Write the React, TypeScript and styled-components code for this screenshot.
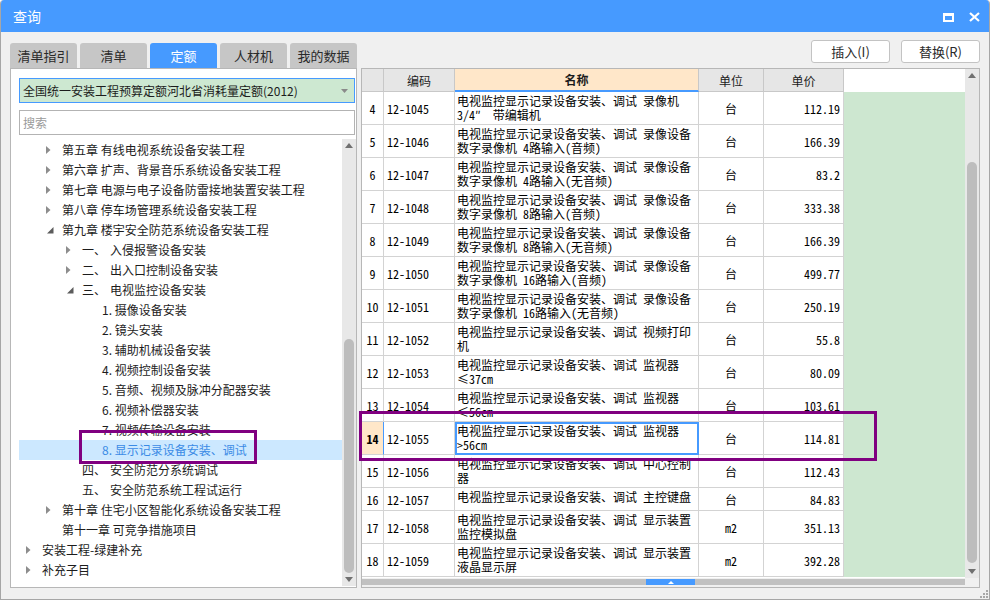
import React from "react";
import styled, { createGlobalStyle } from "styled-components";

const BLUE = "#469aff";
const GRID = "#d3d3d3";
const PURPLE = "#800080";

const GlobalStyle = createGlobalStyle`
  html, body {
    margin: 0;
    padding: 0;
    background: #ffffff;
  }
  body {
    font-family: "Noto Sans CJK SC", "Liberation Sans", sans-serif;
  }
  * {
    box-sizing: border-box;
  }
`;

interface TreeNode {
  level: number;
  text: string;
  sub?: string;
  arrow?: "open" | "closed";
  selected?: boolean;
}

const tree: TreeNode[] = [
  { level: 1, text: "第五章 有线电视系统设备安装工程", arrow: "closed" },
  { level: 1, text: "第六章 扩声、背景音乐系统设备安装工程", arrow: "closed" },
  { level: 1, text: "第七章 电源与电子设备防雷接地装置安装工程", arrow: "closed" },
  { level: 1, text: "第八章 停车场管理系统设备安装工程", arrow: "closed" },
  { level: 1, text: "第九章 楼宇安全防范系统设备安装工程", arrow: "open" },
  { level: 2, text: "一、", sub: "入侵报警设备安装", arrow: "closed" },
  { level: 2, text: "二、", sub: "出入口控制设备安装", arrow: "closed" },
  { level: 2, text: "三、", sub: "电视监控设备安装", arrow: "open" },
  { level: 3, text: "1. 摄像设备安装" },
  { level: 3, text: "2. 镜头安装" },
  { level: 3, text: "3. 辅助机械设备安装" },
  { level: 3, text: "4. 视频控制设备安装" },
  { level: 3, text: "5. 音频、视频及脉冲分配器安装" },
  { level: 3, text: "6. 视频补偿器安装" },
  { level: 3, text: "7. 视频传输设备安装" },
  { level: 3, text: "8. 显示记录设备安装、调试", selected: true },
  { level: 2, text: "四、", sub: "安全防范分系统调试" },
  { level: 2, text: "五、", sub: "安全防范系统工程试运行" },
  { level: 1, text: "第十章 住宅小区智能化系统设备安装工程", arrow: "closed" },
  { level: 1, text: "第十一章 可竞争措施项目" },
  { level: 0, text: "安装工程-绿建补充", arrow: "closed" },
  { level: 0, text: "补充子目", arrow: "closed" },
];

const L1 = "电视监控显示记录设备安装、调试 ";

interface QuotaRow {
  no: number;
  code: string;
  name: string[];
  unit: string;
  price: string;
  selected?: boolean;
}

const rows: QuotaRow[] = [
  { no: 4, code: "12-1045", name: [L1 + "录像机", "3/4″  带编辑机"], unit: "台", price: "112.19" },
  { no: 5, code: "12-1046", name: [L1 + "录像设备", "数字录像机 4路输入(音频)"], unit: "台", price: "166.39" },
  { no: 6, code: "12-1047", name: [L1 + "录像设备", "数字录像机 4路输入(无音频)"], unit: "台", price: "83.2" },
  { no: 7, code: "12-1048", name: [L1 + "录像设备", "数字录像机 8路输入(音频)"], unit: "台", price: "333.38" },
  { no: 8, code: "12-1049", name: [L1 + "录像设备", "数字录像机 8路输入(无音频)"], unit: "台", price: "166.39" },
  { no: 9, code: "12-1050", name: [L1 + "录像设备", "数字录像机 16路输入(音频)"], unit: "台", price: "499.77" },
  { no: 10, code: "12-1051", name: [L1 + "录像设备", "数字录像机 16路输入(无音频)"], unit: "台", price: "250.19" },
  { no: 11, code: "12-1052", name: [L1 + "视频打印", "机"], unit: "台", price: "55.8" },
  { no: 12, code: "12-1053", name: [L1 + "监视器", "≤37cm"], unit: "台", price: "80.09" },
  { no: 13, code: "12-1054", name: [L1 + "监视器", "≤56cm"], unit: "台", price: "103.61" },
  { no: 14, code: "12-1055", name: [L1 + "监视器", ">56cm"], unit: "台", price: "114.81", selected: true },
  { no: 15, code: "12-1056", name: [L1 + "中心控制", "器"], unit: "台", price: "112.43" },
  { no: 16, code: "12-1057", name: [L1 + "主控键盘"], unit: "台", price: "84.83" },
  { no: 17, code: "12-1058", name: [L1 + "显示装置", "监控模拟盘"], unit: "m2", price: "351.13" },
  { no: 18, code: "12-1059", name: [L1 + "显示装置", "液晶显示屏"], unit: "m2", price: "392.28" },
];

const tabs = ["清单指引", "清单", "定额", "人材机", "我的数据"];

export default function App() {
  return (
    <>
      <GlobalStyle />
      <Window>
        <TitleBar>
          <Title>查询</Title>
          <WinButtons>
            <svg width="11" height="9" viewBox="0 0 11 9">
              <rect x="1" y="1" width="9" height="7" fill="none" stroke="#fff" strokeWidth="2" />
              <rect x="0" y="0" width="11" height="3" fill="#fff" />
            </svg>
            <svg width="11" height="10" viewBox="0 0 11 10">
              <path d="M1 1 L10 9 M10 1 L1 9" stroke="#fff" strokeWidth="2.2" />
            </svg>
          </WinButtons>
        </TitleBar>

        <Body>
          <LeftCol>
            <Tabs>
              {tabs.map((t) => (
                <Tab key={t} active={t === "定额"}>
                  {t}
                </Tab>
              ))}
            </Tabs>
            <LeftPanel>
              <Dropdown>
                <span>全国统一安装工程预算定额河北省消耗量定额(2012)</span>
                <svg width="7" height="4" viewBox="0 0 7 4">
                  <polygon points="0,0 7,0 3.5,4" fill="#8a8a8a" />
                </svg>
              </Dropdown>
              <SearchBox>搜索</SearchBox>
              <TreeArea>
                <TreeList>
                  {tree.map((n, i) => (
                    <TreeRow key={i} level={n.level} selected={n.selected}>
                      <ArrowSlot>
                        {n.arrow === "closed" && (
                          <svg width="5" height="8" viewBox="0 0 5 8">
                            <polygon points="0,0 4.5,4 0,8" fill="#8d8d8d" />
                          </svg>
                        )}
                        {n.arrow === "open" && (
                          <svg width="7" height="7" viewBox="0 0 7 7" style={{ marginLeft: 1 }}>
                            <polygon points="6.5,0 6.5,6.5 0,6.5" fill="#5c5c5c" />
                          </svg>
                        )}
                      </ArrowSlot>
                      <TreeText>{n.text}</TreeText>
                      {n.sub && <TreeSub>{n.sub}</TreeSub>}
                    </TreeRow>
                  ))}
                </TreeList>
                <VScroll>
                  <ScrollArrow>
                    <svg width="8" height="5" viewBox="0 0 8 5">
                      <polygon points="0,5 4,0 8,5" fill="#707070" />
                    </svg>
                  </ScrollArrow>
                  <Track top={187} bottom={0}>
                    <Thumb />
                  </Track>
                  <ScrollArrow>
                    <svg width="8" height="5" viewBox="0 0 8 5">
                      <polygon points="0,0 8,0 4,5" fill="#707070" />
                    </svg>
                  </ScrollArrow>
                </VScroll>
              </TreeArea>
            </LeftPanel>
          </LeftCol>

          <RightCol>
            <ButtonRow>
              <ActionButton>插入(I)</ActionButton>
              <ActionButton>替换(R)</ActionButton>
            </ButtonRow>
            <RightPanel>
              <MainArea>
                <TableRegion>
                  <HeaderRow>
                    <HeadCell />
                    <HeadCell>编码</HeadCell>
                    <HeadCell accent>名称</HeadCell>
                    <HeadCell>单位</HeadCell>
                    <HeadCell>单价</HeadCell>
                    <HeadFiller />
                  </HeaderRow>
                  {rows.map((r) => (
                    <DataRow key={r.no} tall={r.name.length > 1}>
                      <NoCell selected={r.selected}>{r.no}</NoCell>
                      <CodeCell>{r.code}</CodeCell>
                      <NameCell selected={r.selected}>
                        {r.name.map((line, i) => (
                          <NameLine key={i}>{line}</NameLine>
                        ))}
                      </NameCell>
                      <UnitCell>{r.unit}</UnitCell>
                      <PriceCell>{r.price}</PriceCell>
                      <Filler />
                    </DataRow>
                  ))}
                </TableRegion>
                <VScroll>
                  <ScrollArrow>
                    <svg width="8" height="5" viewBox="0 0 8 5">
                      <polygon points="0,5 4,0 8,5" fill="#707070" />
                    </svg>
                  </ScrollArrow>
                  <Track top={80} bottom={2}>
                    <Thumb />
                  </Track>
                  <ScrollArrow>
                    <svg width="8" height="5" viewBox="0 0 8 5">
                      <polygon points="0,0 8,0 4,5" fill="#707070" />
                    </svg>
                  </ScrollArrow>
                </VScroll>
              </MainArea>
              <HScrollRow>
                <HBar>
                  <HHandle>
                    <svg width="6" height="3" viewBox="0 0 6 3">
                      <polygon points="0,3 3,0 6,3" fill="#ffffff" />
                    </svg>
                  </HHandle>
                </HBar>
                <Corner />
              </HScrollRow>
            </RightPanel>
          </RightCol>
        </Body>

        <Footer>
          <svg width="9" height="9" viewBox="0 0 9 9">
            <rect x="7" y="1" width="2" height="2" fill="#a8a8a8" />
            <rect x="4" y="4" width="2" height="2" fill="#a8a8a8" />
            <rect x="7" y="4" width="2" height="2" fill="#a8a8a8" />
            <rect x="1" y="7" width="2" height="2" fill="#a8a8a8" />
            <rect x="4" y="7" width="2" height="2" fill="#a8a8a8" />
            <rect x="7" y="7" width="2" height="2" fill="#a8a8a8" />
          </svg>
        </Footer>

        <Highlight style={{ left: 78, top: 430, width: 178, height: 34 }} />
        <Highlight style={{ left: 358, top: 411, width: 518, height: 50 }} />
      </Window>
    </>
  );
}

const Window = styled.div`
  position: relative;
  width: 990px;
  height: 600px;
  display: flex;
  flex-direction: column;
  background: #f0f0f0;
  border: 1px solid #a6a6a6;
  border-top: none;
  border-radius: 4px 4px 0 0;
  overflow: hidden;
  font-size: 12px;
  color: #1c1c1c;
`;

const TitleBar = styled.div`
  flex: none;
  height: 32px;
  background: ${BLUE};
  display: flex;
  align-items: center;
  justify-content: space-between;
  padding: 0 9px 0 12px;
  color: #ffffff;
`;

const Title = styled.span`
  font-size: 14px;
  line-height: 32px;
`;

const WinButtons = styled.div`
  display: flex;
  align-items: center;
  gap: 15px;
  padding-top: 2px;
`;

const Body = styled.div`
  flex: 1;
  min-height: 0;
  display: flex;
  gap: 4px;
  padding: 8px 9px 0 9px;
`;

const LeftCol = styled.div`
  width: 347px;
  flex: none;
  display: flex;
  flex-direction: column;
  padding-top: 3px;
`;

const Tabs = styled.div`
  display: flex;
  gap: 3px;
  height: 25px;
  flex: none;
`;

const Tab = styled.div<{ active?: boolean }>`
  width: 77px;
  display: flex;
  align-items: center;
  justify-content: center;
  border-radius: 3px 3px 0 0;
  font-size: 13px;
  background: ${(p) => (p.active ? BLUE : "#c6c6c6")};
  color: ${(p) => (p.active ? "#ffffff" : "#2a2a2a")};
`;

const LeftPanel = styled.div`
  flex: 1;
  min-height: 0;
  display: flex;
  flex-direction: column;
  background: #ffffff;
  border: 1px solid #b7b7b7;
  padding: 9px 0 0 8px;
`;

const Dropdown = styled.div`
  height: 25px;
  flex: none;
  margin-right: 1px;
  display: flex;
  align-items: center;
  justify-content: space-between;
  padding: 0 6px 0 3px;
  background: #cde8d1;
  border: 1px solid ${BLUE};
  color: #1c1c1c;
`;

const SearchBox = styled.div`
  height: 25px;
  flex: none;
  margin: 7px 1px 0 0;
  display: flex;
  align-items: center;
  padding: 0 3px;
  border: 1px solid #b3b3b3;
  color: #9a9a9a;
`;

const TreeArea = styled.div`
  flex: 1;
  min-height: 0;
  display: flex;
  margin-top: 4px;
  padding-bottom: 1px;
`;

const TreeList = styled.div`
  flex: 1;
  padding-top: 1px;
  overflow: hidden;
`;

const TreeRow = styled.div<{ level: number; selected?: boolean }>`
  height: 20px;
  display: flex;
  align-items: center;
  padding-left: ${(p) => 7 + p.level * 20}px;
  background: ${(p) => (p.selected ? "#cce8ff" : "transparent")};
  color: ${(p) => (p.selected ? "#3b8be6" : "#1c1c1c")};
  white-space: nowrap;
`;

const ArrowSlot = styled.span`
  width: 16px;
  flex: none;
  display: flex;
  align-items: center;
`;

const TreeText = styled.span`
  line-height: 20px;
`;

const TreeSub = styled.span`
  margin-left: 4px;
  line-height: 20px;
`;

const VScroll = styled.div`
  width: 14px;
  flex: none;
  display: flex;
  flex-direction: column;
  background: #e8e8e8;
`;

const ScrollArrow = styled.div`
  height: 13px;
  flex: none;
  display: flex;
  align-items: center;
  justify-content: center;
`;

const Track = styled.div<{ top: number; bottom: number }>`
  flex: 1;
  display: flex;
  flex-direction: column;
  padding: ${(p) => p.top}px 2px ${(p) => p.bottom}px 2px;
`;

const Thumb = styled.div`
  flex: 1;
  border-radius: 5px;
  background: #bdbdbd;
`;

const RightCol = styled.div`
  flex: 1;
  min-width: 0;
  display: flex;
  flex-direction: column;
`;

const ButtonRow = styled.div`
  height: 23px;
  flex: none;
  display: flex;
  justify-content: flex-end;
  gap: 11px;
  margin-bottom: 5px;
`;

const ActionButton = styled.button`
  width: 79px;
  height: 23px;
  padding: 0;
  border: 1px solid #c3c3c3;
  border-radius: 3px;
  background: #ffffff;
  font-family: "Noto Sans CJK SC", "Liberation Sans", sans-serif;
  font-size: 13px;
  color: #2a2a2a;
`;

const RightPanel = styled.div`
  flex: 1;
  min-height: 0;
  display: flex;
  flex-direction: column;
  background: #ffffff;
  border: 1px solid #b7b7b7;
`;

const MainArea = styled.div`
  flex: 1;
  min-height: 0;
  display: flex;
`;

const TableRegion = styled.div`
  flex: 1;
  display: flex;
  flex-direction: column;
  overflow: hidden;
`;

const COLS = "22px 71px 244px 65px 80px 1fr";

const HeaderRow = styled.div`
  display: grid;
  grid-template-columns: ${COLS};
  height: 23px;
  flex: none;
`;

const HeadCell = styled.div<{ accent?: boolean }>`
  display: flex;
  align-items: center;
  justify-content: center;
  background: ${(p) => (p.accent ? "#ffe7c9" : "#e6e6e6")};
  border-right: 1px solid #c8c8c8;
  border-bottom: ${(p) => (p.accent ? `2px solid ${BLUE}` : "1px solid #c8c8c8")};
  font-weight: ${(p) => (p.accent ? 700 : 400)};
  font-size: 12px;
`;

const HeadFiller = styled.div`
  background: #ffffff;
`;

const DataRow = styled.div<{ tall: boolean }>`
  display: grid;
  grid-template-columns: ${COLS};
  height: ${(p) => (p.tall ? 33 : 23)}px;
  flex: none;
  font-family: "Noto Sans CJK SC", sans-serif;
  font-feature-settings: "hwid" 1;
  color: #000000;
`;

const Cell = styled.div`
  border-right: 1px solid ${GRID};
  border-bottom: 1px solid ${GRID};
  display: flex;
  align-items: center;
  white-space: nowrap;
`;

const NoCell = styled(Cell)<{ selected?: boolean }>`
  justify-content: center;
  background: ${(p) => (p.selected ? "#ffe7c9" : "#ffffff")};
  font-weight: ${(p) => (p.selected ? 700 : 400)};
  border-right-color: ${(p) => (p.selected ? BLUE : GRID)};
`;

const CodeCell = styled(Cell)`
  padding-left: 3px;
`;

const NameCell = styled(Cell)<{ selected?: boolean }>`
  flex-direction: column;
  align-items: flex-start;
  justify-content: flex-start;
  padding: 2px 2px 0 2px;
  ${(p) => (p.selected ? `outline: 2px solid ${BLUE}; outline-offset: -2px;` : "")}
`;

const NameLine = styled.div`
  line-height: 14px;
  white-space: pre;
`;

const UnitCell = styled(Cell)`
  justify-content: center;
`;

const PriceCell = styled(Cell)`
  justify-content: flex-end;
  padding-right: 3px;
`;

const Filler = styled.div`
  background: #cde7d0;
`;

const HScrollRow = styled.div`
  height: 9px;
  flex: none;
  display: flex;
  background: #f0f0f0;
`;

const HBar = styled.div`
  flex: 1;
  display: flex;
  margin: 1px 0 2px 0;
  padding-left: 284px;
  background: #c1c1c1;
`;

const HHandle = styled.div`
  width: 49px;
  display: flex;
  align-items: center;
  justify-content: center;
  background: ${BLUE};
`;

const Corner = styled.div`
  width: 14px;
  background: #f0f0f0;
`;

const Footer = styled.div`
  height: 11px;
  flex: none;
  display: flex;
  justify-content: flex-end;
  align-items: flex-end;
  padding: 0 1px 1px 0;
`;

const Highlight = styled.div`
  position: absolute;
  border: 3px solid ${PURPLE};
  pointer-events: none;
`;
